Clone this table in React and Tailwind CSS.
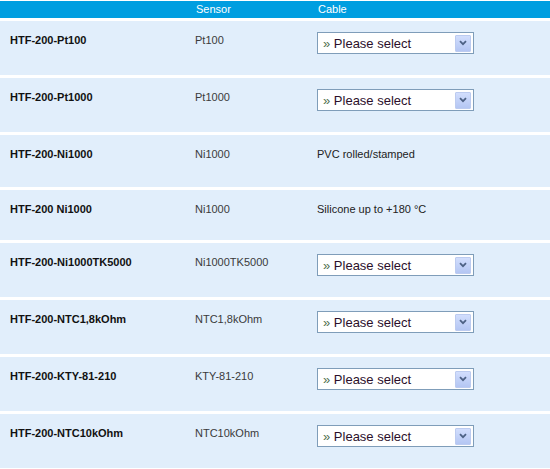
import React from 'react'

const rows = [
  { name: 'HTF-200-Pt100', sensor: 'Pt100', cable: null, h: 'h-[54px]' },
  { name: 'HTF-200-Pt1000', sensor: 'Pt1000', cable: null, h: 'h-[54px]' },
  { name: 'HTF-200-Ni1000', sensor: 'Ni1000', cable: 'PVC rolled/stamped', h: 'h-[52px]' },
  { name: 'HTF-200 Ni1000', sensor: 'Ni1000', cable: 'Silicone up to +180 °C', h: 'h-[50px]' },
  { name: 'HTF-200-Ni1000TK5000', sensor: 'Ni1000TK5000', cable: null, h: 'h-[54px]' },
  { name: 'HTF-200-NTC1,8kOhm', sensor: 'NTC1,8kOhm', cable: null, h: 'h-[54px]' },
  { name: 'HTF-200-KTY-81-210', sensor: 'KTY-81-210', cable: null, h: 'h-[54px]' },
  { name: 'HTF-200-NTC10kOhm', sensor: 'NTC10kOhm', cable: null, h: 'h-[54px]' },
]

function FakeSelect() {
  return (
    <div className="flex h-[22px] w-[157px] items-center border border-[#7f9db9] bg-white pl-[5px] pr-[2px]">
      <span className="flex-1 text-[13px] leading-none text-[#2b0f2b]">
        <span className="text-[#4f6f4f]">»</span> Please select
      </span>
      <div className="flex h-[17px] w-[16px] items-center justify-center rounded-[1px] border border-[#bccbf0] bg-gradient-to-b from-[#d2defd] to-[#b4c6f3]">
        <svg width="8" height="6" viewBox="0 0 8 6">
          <path d="M1 1.2 L4 4.2 L7 1.2" fill="none" stroke="#4d6185" strokeWidth="1.8" />
        </svg>
      </div>
    </div>
  )
}

export default function App() {
  return (
    <div className="min-h-screen w-[550px] bg-white font-['Liberation_Sans',Arial,sans-serif]">
      {/* Header */}
      <div className="mt-px grid h-[17px] grid-cols-[195px_122px_1fr] items-center bg-[#009ee0] text-[11px] text-white">
        <div></div>
        <div className="pl-[1px]">Sensor</div>
        <div className="pl-[1px]">Cable</div>
      </div>

      {/* Rows */}
      <div className="mt-[3px] flex flex-col gap-[3px]">
        {rows.map((row) => (
          <div
            key={row.name}
            className={`grid grid-cols-[195px_122px_1fr] items-start bg-[#e1eefb] pt-[11px] ${row.h}`}
          >
            <div className="pl-[10px] text-[11px] font-bold leading-4 text-[#111]">{row.name}</div>
            <div className="text-[11px] leading-4 text-[#3a3a3a]">{row.sensor}</div>
            <div>
              {row.cable ? (
                <div className="text-[11px] leading-4 text-[#222]">{row.cable}</div>
              ) : (
                <FakeSelect />
              )}
            </div>
          </div>
        ))}
      </div>
    </div>
  )
}
